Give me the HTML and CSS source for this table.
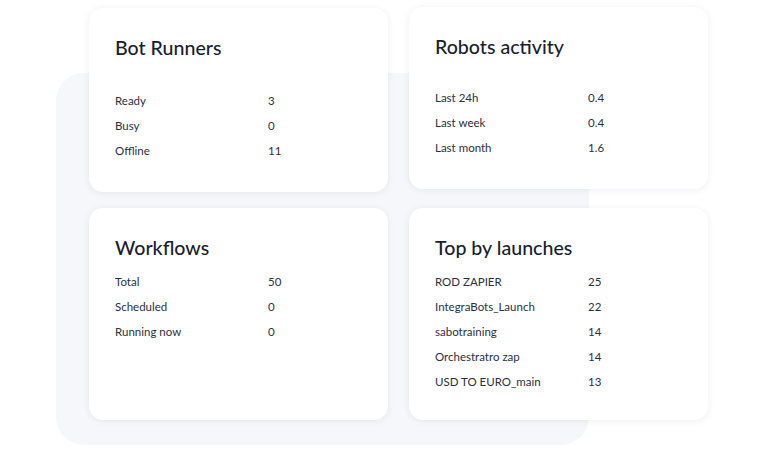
FILE: index.html
```html
<!DOCTYPE html>
<html lang="en">

<head>
    <meta charset="UTF-8">
    <meta name="viewport" content="width=device-width, initial-scale=1.0">
    <title>Dashboard stats</title>
    <link rel="stylesheet" href="styles.css">
</head>

<body>
    <div class="stage">
        <div class="backdrop"></div>

        <div class="cards">
            <div class="card card-runners">
                <h2>Bot Runners</h2>
                <div class="stats stats-loose">
                    <span>Ready</span><span>3</span>
                    <span>Busy</span><span>0</span>
                    <span>Offline</span><span>11</span>
                </div>
            </div>

            <div class="card card-activity">
                <h2>Robots activity</h2>
                <div class="stats stats-mid">
                    <span>Last 24h</span><span>0.4</span>
                    <span>Last week</span><span>0.4</span>
                    <span>Last month</span><span>1.6</span>
                </div>
            </div>

            <div class="card">
                <h2>Workflows</h2>
                <div class="stats">
                    <span>Total</span><span>50</span>
                    <span>Scheduled</span><span>0</span>
                    <span>Running now</span><span>0</span>
                </div>
            </div>

            <div class="card">
                <h2>Top by launches</h2>
                <div class="stats">
                    <span>ROD ZAPIER</span><span>25</span>
                    <span>IntegraBots_Launch</span><span>22</span>
                    <span>sabotraining</span><span>14</span>
                    <span>Orchestratro zap</span><span>14</span>
                    <span>USD TO EURO_main</span><span>13</span>
                </div>
            </div>
        </div>
    </div>
</body>

</html>
```

FILE: styles.css
```css
* {
    margin: 0;
    padding: 0;
    box-sizing: border-box;
}

body {
    font-family: 'Lato', 'Noto Sans', sans-serif;
    background: #ffffff;
    width: 762px;
    height: 452px;
    overflow: hidden;
}

.stage {
    position: relative;
    width: 762px;
    height: 452px;
}

/* soft grey panel sitting behind the cards */
.backdrop {
    position: absolute;
    left: 56px;
    top: 73px;
    width: 533px;
    height: 372px;
    background: #f6f7fa;
    border-radius: 28px;
}

.cards {
    position: relative;
    display: grid;
    grid-template-columns: 299px 299px;
    grid-template-rows: 184px 212px;
    column-gap: 21px;
    row-gap: 16px;
    padding: 8px 0 0 89px;
}

.card {
    background: #ffffff;
    border-radius: 14px;
    padding: 28px 26px 0;
    box-shadow: 0 1px 7px rgba(30, 40, 80, 0.08);
}

.card-activity {
    margin-top: -1px;
    height: 182px;
}

.card h2 {
    font-size: 19.6px;
    line-height: 24px;
    font-weight: 500;
    color: #1a1e2e;
}

.stats {
    display: grid;
    grid-template-columns: 153px auto;
    margin-top: 9px;
    font-size: 11.5px;
    line-height: 25px;
    color: #2b303d;
}

.stats-loose {
    margin-top: 28px;
}

.stats-mid {
    margin-top: 26px;
}
```
